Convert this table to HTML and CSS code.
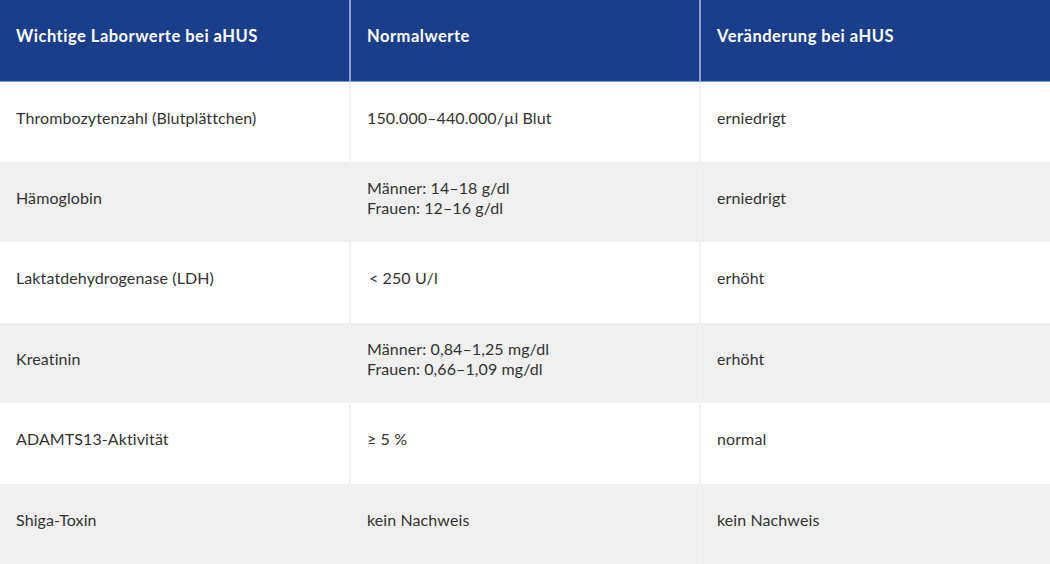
FILE: index.html
```html
<!DOCTYPE html>
<html lang="de">
<head>
<meta charset="utf-8">
<link rel="stylesheet" href="styles.css">
</head>
<body>
<table class="lab">
  <thead>
    <tr>
      <th>Wichtige Laborwerte bei aHUS</th>
      <th>Normalwerte</th>
      <th>Veränderung bei aHUS</th>
    </tr>
  </thead>
  <tbody>
    <tr>
      <td>Thrombozytenzahl (Blutplättchen)</td>
      <td>150.000–440.000/µl Blut</td>
      <td>erniedrigt</td>
    </tr>
    <tr>
      <td>Hämoglobin</td>
      <td>Männer: 14–18 g/dl<br>Frauen: 12–16 g/dl</td>
      <td>erniedrigt</td>
    </tr>
    <tr>
      <td>Laktatdehydrogenase (LDH)</td>
      <td class="ind">&lt; 250 U/l</td>
      <td>erhöht</td>
    </tr>
    <tr>
      <td>Kreatinin</td>
      <td>Männer: 0,84–1,25 mg/dl<br>Frauen: 0,66–1,09 mg/dl</td>
      <td>erhöht</td>
    </tr>
    <tr>
      <td>ADAMTS13-Aktivität</td>
      <td>≥ 5 %</td>
      <td>normal</td>
    </tr>
    <tr>
      <td>Shiga-Toxin</td>
      <td>kein Nachweis</td>
      <td>kein Nachweis</td>
    </tr>
  </tbody>
</table>
</body>
</html>
```

FILE: styles.css
```css
html, body {
  margin: 0;
  padding: 0;
  background: #ffffff;
}

body {
  font-family: Lato, "Open Sans", "Liberation Sans", sans-serif;
  color: #333333;
}

.lab {
  width: 1050px;
  border-collapse: collapse;
  table-layout: fixed;
}

.lab th,
.lab td {
  width: 350px;
  padding: 0 16px 8px;
  text-align: left;
  vertical-align: middle;
  box-sizing: border-box;
}

.lab th {
  height: 81px;
  background: #1a3f8a;
  color: #ffffff;
  font-size: 16.5px;
  font-weight: 700;
  letter-spacing: 0.5px;
  border-bottom: 1px solid #7f97c6;
}

.lab th + th {
  border-left: 2px solid #8ea2cb;
}

.lab td {
  height: 80.5px;
  font-size: 16px;
  line-height: 20px;
  letter-spacing: 0.1px;
  color: #333333;
}

.lab td + td {
  border-left: 2px solid #f2f2f2;
}

.lab tbody tr:nth-child(even) td {
  background: #eff0ef;
}

.lab td.ind {
  padding-left: 18px;
}
```
